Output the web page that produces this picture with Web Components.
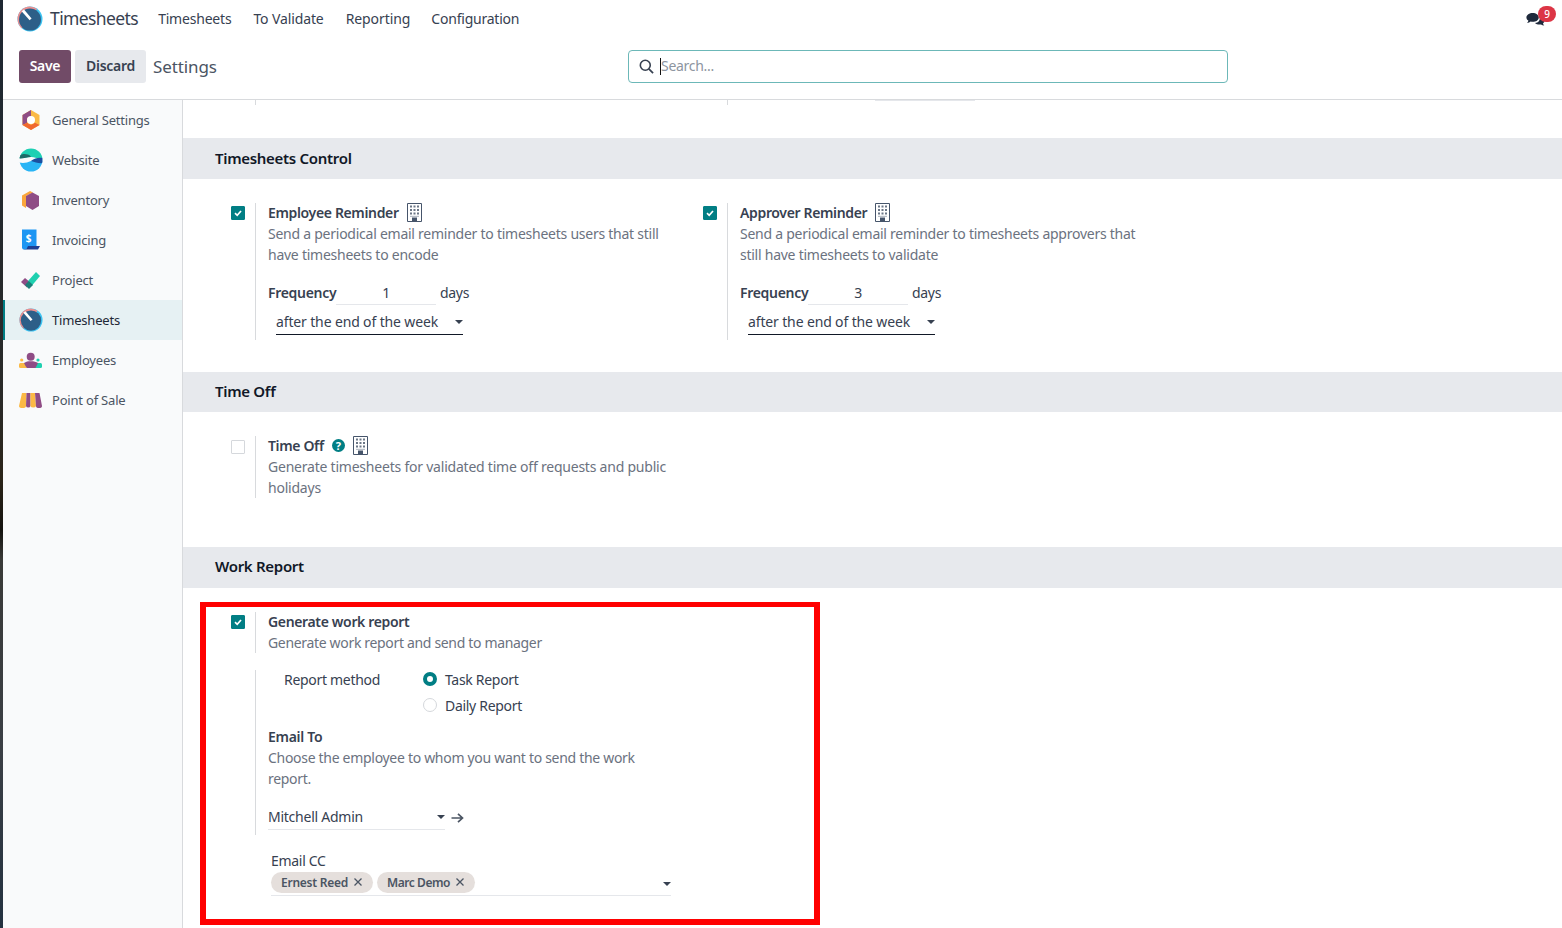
<!DOCTYPE html>
<html><head><meta charset="utf-8"><style>
html,body{margin:0;height:100%;overflow:hidden;background:#fff}
body{font:14px/21px "Noto Sans",sans-serif;color:#374151;letter-spacing:-.3px}
odoo-app{display:flex;height:928px}
</style></head><body>
<odoo-app></odoo-app>
<script>
const ICONS={
timesheets:`<svg viewBox="0 0 26 26"><circle cx="13" cy="13" r="12.5" fill="#3cc4f2"/><path d="M13 .5A12.5 12.5 0 0 0 .5 13 12.5 12.5 0 0 0 5 22.5L20 3A12.5 12.5 0 0 0 13 .5z" fill="#ee8f8f"/><circle cx="13" cy="13.6" r="11" fill="#2d5f88"/><path d="M4.600 5.200 7 3.600 14.600 12.400 12.600 14.200z" fill="#fff"/></svg>`,
general:`<svg viewBox="0 0 24 24"><path d="M12 2 3.500 7v10L12 22l8.500-5V7z" fill="#fbb945"/><path d="M3.500 7 12 2v6l-4 2.300V15l-4.500 2z" fill="#8f4c85"/><path d="M3.500 17 8 14.700 12 17l4-2.300 4.500 2.300L12 22z" fill="#f0682f"/><circle cx="12" cy="12" r="4" fill="#fff"/></svg>`,
website:`<svg viewBox="0 0 24 24"><defs><clipPath id="c"><circle cx="12" cy="12" r="11.500"/></clipPath></defs><g clip-path="url(#c)"><path d="M0 0h24v9.500c-4 2-7.500 0-11.500-.5C8 8.500 4 11 0 10z" fill="#1ed0b3"/><path d="M0 7.500c3-1.800 6-2 9-1 1.500.6 2.500 1.500 3 2.500-4 0-8 2-12 1.500z" fill="#1d6b68"/><path d="M0 14.500c4 1 8 .5 12-1.500 4-1.800 8-1.500 12 0V24H0z" fill="#2ab4f5"/><path d="M12 13c4-3.300 8-3.800 12-3v5c-4 .5-8-.5-12-2z" fill="#1b4fa0"/></g></svg>`,
inventory:`<svg viewBox="0 0 24 24"><path d="M11 3 3 7.500v10L7 20V8l7-3.500z" fill="#fba63c"/><path d="M13.500 4.500 20 8v10l-6.500 4L7 18V8z" fill="#8f4c85"/></svg>`,
invoicing:`<svg viewBox="0 0 24 24"><path d="M3 1.500h14.500V18L6 21.500H5a2 2 0 0 1-2-2z" fill="#1d96f3"/><path d="M9 18h12l-2 3.500H3.500l4 -.5z" fill="#1c3f94"/><text x="9.500" y="13.500" font-family="Noto Sans" font-weight="700" font-size="10" fill="#fff" text-anchor="middle">$</text></svg>`,
project:`<svg viewBox="0 0 24 24"><path d="M2 14 6 10l6 5-4 4.500z" fill="#8f4c85"/><path d="M9 13l8-9 4 4-8 9.500z" fill="#1fd0b0"/><path d="M9.800 13 14 17l-4 4-4-4z" fill="#1b7f78"/></svg>`,
employees:`<svg viewBox="0 0 24 24"><circle cx="11.700" cy="8.700" r="4" fill="#8f4c85"/><circle cx="2.700" cy="12" r="1.600" fill="#fbb945"/><circle cx="19" cy="12" r="1.600" fill="#1fd0b0"/><rect y="15" width="9" height="5" rx="1.500" fill="#fbb945"/><rect x="14" y="15" width="9" height="5" rx="1.500" fill="#1fd0b0"/><path d="M5 15c2-1.500 4-1.800 7-1.800s5 .6 7 1.800c-1 2-2 4-2.500 5H8c-1-1-2-3-3-5z" fill="#8f4c85"/></svg>`,
pos:`<svg viewBox="0 0 24 24"><path d="M3 5h4.500L7 18a3.500 2 0 0 1-7 0z" fill="#fbb945"/><path d="M7.500 5h4v13a2.300 2 0 0 1-4.500 0z" fill="#8f4c85"/><path d="M11.500 5h4.500l1 13a2.800 2 0 0 1-5.500 0z" fill="#fbb945"/><path d="M16 5h4.500L23 18a3 2 0 0 1-6 0z" fill="#8f4c85"/></svg>`,
building:`<svg viewBox="0 0 15 19"><path d="M.5.500h14v18H.500z" fill="#fff" stroke="#46556b"/><path d="M3 2.500h2v2H3zM6.500 2.500h2v2h-2zM10 2.500h2v2h-2zM3 6h2v2H3zM6.500 6h2v2h-2zM10 6h2v2h-2zM3 9.500h2v2H3zM6.500 9.500h2v2h-2zM10 9.500h2v2h-2z" fill="#6b7686"/><path d="M5 14.500h5v4H5z" fill="#46556b"/><path d="M3 12.800h9v1H3z" fill="#a8b0bb"/></svg>`,
search:`<svg viewBox="0 0 16 16"><circle cx="6.700" cy="6.700" r="5.300" fill="none" stroke="#374151" stroke-width="1.700"/><path d="M10.500 10.500 15 15" stroke="#374151" stroke-width="1.900"/></svg>`,
chat:`<svg viewBox="0 0 20 16"><path d="M7 1c3.500 0 6.500 2 6.500 4.800S10.500 10.500 7 10.500c-.8 0-1.500-.1-2.100-.3C3.800 11 2.600 11.500 1 11.700c.8-.8 1.300-1.700 1.400-2.600C1 8.200.3 7 .3 5.800.3 3 3.500 1 7 1z" fill="#1f2a3c"/><path d="M14.600 5c2.800.3 5 2 5 4.200 0 1.100-.6 2.100-1.600 2.900.1.900.6 1.700 1.300 2.400-1.400-.2-2.500-.6-3.400-1.300-.6.100-1.100.2-1.700.2-1.900 0-3.600-.7-4.700-1.700 3.300-.3 5.800-2.700 5.100-6.700z" fill="#1f2a3c"/></svg>`
};
const SIZES={timesheets:[26,26],building:[15,19],search:[15,15],chat:[19,15]};

function def(name,html){
  customElements.define(name,class extends HTMLElement{
    connectedCallback(){
      if(this.shadowRoot)return;
      const s=this.attachShadow({mode:'open'});
      s.innerHTML=typeof html==='function'?html(this):html;
    }
  });
}
const attr=(e,n,d='')=>e.getAttribute(n)??d;

def('o-icon',e=>{const n=attr(e,'name');const [w,h]=e.hasAttribute('size')?[+attr(e,'size'),+attr(e,'size')]:(SIZES[n]||[24,24]);
return `<style>:host{display:inline-flex;line-height:0;vertical-align:middle}svg{width:${w}px;height:${h}px}</style>${ICONS[n]}`});

def('o-navbar',`<style>
:host{display:flex;align-items:center;height:38px;flex:none;color:#374151;padding-left:14px;box-sizing:border-box}
.brand{font-size:17.500px;margin:0 20px 2px 7px;color:#374151;letter-spacing:-.6px}
.item{margin:0 22px 2px 0}
.end{margin:0 17px 0 auto;position:relative;display:flex}
.badge{position:absolute;left:12px;top:-6px;width:18px;height:16px;background:#dc3545;color:#fff;border-radius:9px;font:500 10px/16px "Noto Sans",sans-serif;text-align:center;letter-spacing:0}
</style><o-icon name="timesheets"></o-icon><span class="brand">Timesheets</span>
<span class="item" style="letter-spacing:-.2px">Timesheets</span><span class="item" style="letter-spacing:-.12px">To Validate</span><span class="item" style="letter-spacing:-.08px;margin-right:21px">Reporting</span><span class="item" style="letter-spacing:-.22px">Configuration</span>
<span class="end"><o-icon name="chat"></o-icon><span class="badge">9</span></span>`);

def('o-controlbar',`<style>
:host{display:grid;grid-template-columns:625px 600px;height:62px;flex:none;box-sizing:border-box;border-bottom:1px solid #d8dadd;padding-top:12px}
.left{display:flex;align-items:flex-start;padding-left:16px;gap:4px}
button{height:33px;border:0;border-radius:3px;font:600 14px "Noto Sans",sans-serif;letter-spacing:-.3px;padding:0 0 2px;box-sizing:border-box}
.save{background:#714b67;color:#fff;width:52px}.discard{background:#e7e9ed;color:#374151;width:71px}
.title{font-size:17px;margin-left:3px;line-height:34px;color:#4b5563;letter-spacing:-.1px}
.search{height:33px;box-sizing:border-box;border:1px solid #6cb8b8;border-radius:4px;display:flex;align-items:center;padding-left:10px;color:#8d95a0}
.caret{width:1px;height:17px;background:#111;margin:0 0 0 6px}
.ph{padding-bottom:2px}
</style><div class="left"><button class="save">Save</button><button class="discard">Discard</button><span class="title">Settings</span></div>
<div class="search"><o-icon name="search"></o-icon><span class="caret"></span><span class="ph">Search...</span></div>`);

def('o-side-item',e=>`<style>
:host{display:flex;align-items:center;height:40px;box-sizing:border-box;padding-left:16px;font-size:13px;gap:9px;color:#4b5563;letter-spacing:-.2px}
:host([active]){background:#e6f1f3;box-shadow:inset 2px 0 #017e84;color:#1f2937}
</style><o-icon name="${attr(e,'icon')}" size="24"></o-icon><slot></slot>`);

def('o-sidebar',`<style>:host{display:block;width:179px;flex:none;background:#f9fafb;border-right:1px solid #d8dadd}</style><slot></slot>`);

def('o-section',e=>`<style>
:host{display:block}
h2{margin:0;background:#e7e9ed;height:var(--h,41px);padding-left:32px;font:600 15px/var(--lh,40px) "Noto Sans",sans-serif;color:#111827;letter-spacing:-.3px;box-sizing:border-box}
.body{padding:var(--pt,24px) 0 var(--pb,32px) 48px}
</style><h2>${attr(e,'title')}</h2><div class="body"><slot></slot></div>`);

def('o-check',e=>`<style>
:host{display:block;width:14px;height:14px;box-sizing:border-box;border:1px solid #d5d8dc;border-radius:1px;margin-top:var(--ct,3px)}
:host([on]){background:#017e84;border-color:#017e84}
svg{display:block}
</style>${e.hasAttribute('on')?'<svg viewBox="0 0 12 12" width="12" height="12"><path d="M3 6.200 5.200 8.300 9 4" fill="none" stroke="#fff" stroke-width="1.700"/></svg>':''}`);

def('o-setting',e=>`<style>
:host{display:grid;grid-template-columns:24px 1fr;width:472px;box-sizing:border-box;align-items:start}
.right{border-left:1px solid #d8dadd;padding-left:12px;width:412px}
.t{font-weight:600;color:#374151;display:flex;align-items:center;gap:8px;letter-spacing:-.35px;margin-top:-1px}
.d{color:#6b7280;letter-spacing:var(--dls,-.25px)}
</style><o-check ${e.hasAttribute('off')?'':'on'}></o-check><div class="right"><div class="t"><span>${attr(e,'title')}</span><slot name="icons"></slot></div><div class="d">${attr(e,'desc')}</div><slot></slot></div>`);

def('o-frequency',e=>`<style>
:host{display:block;margin-top:17px;padding-bottom:5px}
.r{display:flex;align-items:flex-start;height:21px}
b{font-weight:600;width:68px}
.v{width:100px;height:21px;text-align:center;border-bottom:1px solid #e5e7eb;padding-bottom:1px}
.u{margin-left:4px}
.sel{margin:6px 0 0 8px;width:187px;height:26px;box-sizing:border-box;border-bottom:1px solid #111827;display:flex;justify-content:space-between;align-items:center;line-height:21px;color:#374151;letter-spacing:-.14px}
</style><div class="r"><b>Frequency</b><span class="v">${attr(e,'value')}</span><span class="u">days</span></div>
<div class="sel"><span>after the end of the week</span><o-caret></o-caret></div>`);

def('o-caret',`<style>:host{display:block;width:0;height:0;border:4px solid transparent;border-top-color:#374151;border-bottom:0}</style>`);

def('o-help',`<style>:host{display:inline-block;width:13px;height:13px;border-radius:50%;background:#017e84;color:#fff;font:700 11px/13px "Noto Sans",sans-serif;text-align:center;letter-spacing:0}</style>?`);

def('o-radio',e=>`<style>
:host{display:flex;align-items:center;gap:8px;height:26px}
i{width:14px;height:14px;border-radius:50%;box-sizing:border-box;border:1px solid #d5d8dc;display:block}
:host([on]) i{border:4px solid #017e84;background:#fff}
</style><i></i><slot></slot>`);

def('o-tag',e=>`<style>
:host{display:inline-flex;align-items:center;height:21px;border-radius:11px;background:#e5dfdc;padding:0 10px;font-size:12px;font-weight:600;color:#4b5563;gap:5px;line-height:21px;letter-spacing:-.25px}
svg{display:block;margin-top:-2px}
</style><slot></slot><svg viewBox="0 0 10 10" width="10" height="10"><path d="M1.500 1.500l7 7M8.500 1.500l-7 7" stroke="#4b5563" stroke-width="1.300"/></svg>`);

def('o-report',`<style>
:host{display:block;margin-top:17px;margin-left:24px}
.sub{display:flow-root;border-left:1px solid #d8dadd;padding-left:12px;width:412px;height:165px}
.m{display:grid;grid-template-columns:139px 1fr;padding-left:16px;margin-top:-1px}
.lab{line-height:21px}
.rad{margin-top:-3px}
.et{font-weight:600;margin-top:8px}
.d{color:#6b7280}
.mp{display:flex;margin-top:17px;align-items:flex-start}
.mi{width:177px;height:23px;border-bottom:1px solid #e5e7eb;display:flex;justify-content:space-between;letter-spacing:-.25px}
.mi o-caret{margin-top:9px}
.arr{margin:6px 0 0 6px;line-height:0}
.cc{margin:15px 0 0 16px;width:400px}
.tags{display:flex;gap:4px;height:23px;margin-top:1px;border-bottom:1px solid #e5e7eb;align-items:flex-start;position:relative}
.tags o-caret{position:absolute;right:0;top:10px}
</style>
<div class="sub">
<div class="m"><span class="lab">Report method</span><div class="rad"><o-radio on>Task Report</o-radio><o-radio>Daily Report</o-radio></div></div>
<div class="et">Email To</div>
<div class="d">Choose the employee to whom you want to send the work report.</div>
<div class="mp"><div class="mi"><span>Mitchell Admin</span><o-caret></o-caret></div><span class="arr"><svg viewBox="0 0 12 12" width="13" height="12"><path d="M0 6h10.500M6.500 1.800 11 6l-4.500 4.200" fill="none" stroke="#4b5563" stroke-width="1.700"/></svg></span></div>
</div>
<div class="cc"><div>Email CC</div><div class="tags"><o-tag>Ernest Reed</o-tag><o-tag style="letter-spacing:-.45px">Marc Demo</o-tag><o-caret></o-caret></div></div>`);

def('o-stub',`<style>
:host{display:grid;grid-template-columns:472px 472px;height:38px;padding-left:48px;box-sizing:border-box}
div{height:5px;margin-left:24px;border-left:1px solid #d8dadd}
span{display:block;width:100px;height:1px;margin-left:147px;background:#e5e7eb}
</style><div></div><div><span></span></div>`);

def('o-settings',`<style>
:host{display:block;flex:1;min-width:0;overflow:hidden}
.row{display:flex}
</style>
<o-stub></o-stub>
<o-section title="Timesheets Control"><div class="row">
<o-setting title="Employee Reminder" desc="Send a periodical email reminder to timesheets users that still have timesheets to encode"><o-icon slot="icons" name="building"></o-icon><o-frequency value="1"></o-frequency></o-setting>
<o-setting title="Approver Reminder" desc="Send a periodical email reminder to timesheets approvers that still have timesheets to validate"><o-icon slot="icons" name="building"></o-icon><o-frequency value="3"></o-frequency></o-setting>
</div></o-section>
<o-section title="Time Off" style="--h:40px;--lh:39px;--pb:49px;--ct:4px;--dls:-.22px"><o-setting off title="Time Off" desc="Generate timesheets for validated time off requests and public holidays"><span slot="icons" style="display:flex;gap:8px;align-items:center"><o-help></o-help><o-icon name="building"></o-icon></span></o-setting></o-section>
<o-section title="Work Report" style="--lh:39px;--dls:-.33px"><o-setting title="Generate work report" desc="Generate work report and send to manager"></o-setting><o-report></o-report></o-section>`);

def('odoo-app',`<style>
:host{display:flex;height:928px;position:relative;overflow:hidden}
.edge{width:3px;flex:none;background:linear-gradient(#1e2833 0,#2a2a28 400px,#2b2418 480px,#15130f 530px,#3a3a38 560px,#3b3f45 750px,#233140 928px)}
.main{flex:1;display:flex;flex-direction:column;min-width:0}
.bottom{flex:1;display:flex;min-height:0}
.mark{position:absolute;left:200px;top:602px;width:620px;height:323px;box-sizing:border-box;border:6px solid #f00;border-top-width:5px;pointer-events:none}
</style>
<div class="edge"></div>
<div class="main"><o-navbar></o-navbar><o-controlbar></o-controlbar>
<div class="bottom"><o-sidebar>
<o-side-item icon="general">General Settings</o-side-item>
<o-side-item icon="website">Website</o-side-item>
<o-side-item icon="inventory">Inventory</o-side-item>
<o-side-item icon="invoicing">Invoicing</o-side-item>
<o-side-item icon="project">Project</o-side-item>
<o-side-item icon="timesheets" active>Timesheets</o-side-item>
<o-side-item icon="employees">Employees</o-side-item>
<o-side-item icon="pos">Point of Sale</o-side-item>
</o-sidebar><o-settings></o-settings></div></div>
<div class="mark"></div>`);
</script>
</body></html>
